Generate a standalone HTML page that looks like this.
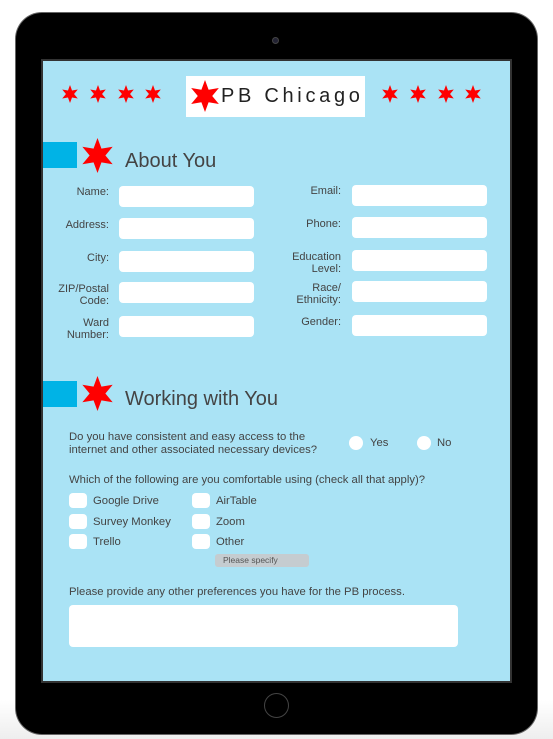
<!DOCTYPE html>
<html><head><meta charset="utf-8"><style>
*{margin:0;padding:0;box-sizing:border-box}
body{width:553px;height:739px;background:linear-gradient(#fff 0,#fff 700px,#eee 739px);position:relative;overflow:hidden;font-family:"Liberation Sans",Arial,sans-serif;color:#444}
.a{position:absolute}
#body{left:16px;top:13px;width:521px;height:721px;background:#000;border-radius:26px;box-shadow:0 0 0 1px #666}
#scr{left:41px;top:59px;width:471px;height:624px;background:#aae3f5;border:2px solid #333}
.in{position:absolute;background:#fff;border-radius:4px;width:135px;height:21px}
.lb{position:absolute;font-size:11px;line-height:12px;text-align:right;color:#444}
.cb{position:absolute;background:#fff;border-radius:4px;width:18px;height:15px}
.ct{position:absolute;font-size:11.3px;color:#444}
.rd{position:absolute;width:14px;height:14px;border-radius:50%;background:#fff}
.h{position:absolute;font-size:20px;color:#444}
.blk{position:absolute;left:43px;width:34px;height:26px;background:#00b3e6}
</style></head><body>
<svg width="0" height="0" style="position:absolute"><defs><symbol id="s" viewBox="-10 -10 20 20"><polygon fill="#f00" points="0,-10 2.25,-3.9 8.66,-5 4.5,0 8.66,5 2.25,3.9 0,10 -2.25,3.9 -8.66,5 -4.5,0 -8.66,-5 -2.25,-3.9"/></symbol></defs></svg>
<div class="a" id="body"></div>
<div class="a" style="left:272px;top:37px;width:7px;height:7px;border-radius:50%;background:#223;border:1px solid #444"></div>
<div class="a" style="left:264px;top:693px;width:25px;height:25px;border-radius:50%;border:1px solid #444"></div>
<div class="a" id="scr"></div>
<svg class="a" style="left:61px;top:85px" width="18" height="18"><use href="#s"/></svg>
<svg class="a" style="left:89px;top:85px" width="18" height="18"><use href="#s"/></svg>
<svg class="a" style="left:117px;top:85px" width="18" height="18"><use href="#s"/></svg>
<svg class="a" style="left:144px;top:85px" width="18" height="18"><use href="#s"/></svg>
<svg class="a" style="left:381px;top:85px" width="18" height="18"><use href="#s"/></svg>
<svg class="a" style="left:409px;top:85px" width="18" height="18"><use href="#s"/></svg>
<svg class="a" style="left:437px;top:85px" width="18" height="18"><use href="#s"/></svg>
<svg class="a" style="left:464px;top:85px" width="18" height="18"><use href="#s"/></svg>
<div class="a" style="left:186px;top:76px;width:179px;height:41px;background:#fff"></div>
<svg class="a" style="left:189px;top:80px" width="32" height="32"><use href="#s"/></svg>
<div class="a" style="left:221px;top:85px;font-size:20px;letter-spacing:3.7px;color:#222">PB Chicago</div>

<div class="blk" style="top:142px"></div>
<svg class="a" style="left:80px;top:138px" width="35" height="35"><use href="#s"/></svg>
<div class="h" style="left:125px;top:150px">About You</div>

<div class="lb" style="right:444px;top:186px">Name:</div>
<div class="lb" style="right:444px;top:219px">Address:</div>
<div class="lb" style="right:444px;top:252px">City:</div>
<div class="lb" style="right:444px;top:283px">ZIP/Postal<br>Code:</div>
<div class="lb" style="right:444px;top:317px">Ward<br>Number:</div>
<div class="in" style="left:119px;top:186px"></div>
<div class="in" style="left:119px;top:218px"></div>
<div class="in" style="left:119px;top:251px"></div>
<div class="in" style="left:119px;top:282px"></div>
<div class="in" style="left:119px;top:316px"></div>
<div class="lb" style="right:212px;top:185px">Email:</div>
<div class="lb" style="right:212px;top:218px">Phone:</div>
<div class="lb" style="right:212px;top:251px">Education<br>Level:</div>
<div class="lb" style="right:212px;top:282px">Race/<br>Ethnicity:</div>
<div class="lb" style="right:212px;top:316px">Gender:</div>
<div class="in" style="left:352px;top:185px"></div>
<div class="in" style="left:352px;top:217px"></div>
<div class="in" style="left:352px;top:250px"></div>
<div class="in" style="left:352px;top:281px"></div>
<div class="in" style="left:352px;top:315px"></div>

<div class="blk" style="top:381px"></div>
<svg class="a" style="left:80px;top:376px" width="35" height="35"><use href="#s"/></svg>
<div class="h" style="left:125px;top:388px">Working with You</div>

<div class="ct" style="left:69px;top:431px;line-height:13px">Do you have consistent and easy access to the<br>internet and other associated necessary devices?</div>
<div class="rd" style="left:349px;top:436px"></div><div class="ct" style="left:370px;top:437px">Yes</div>
<div class="rd" style="left:417px;top:436px"></div><div class="ct" style="left:437px;top:437px">No</div>
<div class="ct" style="left:69px;top:474px">Which of the following are you comfortable using (check all that apply)?</div>
<div class="cb" style="left:69px;top:493px"></div><div class="ct" style="left:93px;top:495px">Google Drive</div>
<div class="cb" style="left:69px;top:514px"></div><div class="ct" style="left:93px;top:516px">Survey Monkey</div>
<div class="cb" style="left:69px;top:534px"></div><div class="ct" style="left:93px;top:536px">Trello</div>
<div class="cb" style="left:192px;top:493px"></div><div class="ct" style="left:216px;top:495px">AirTable</div>
<div class="cb" style="left:192px;top:514px"></div><div class="ct" style="left:216px;top:516px">Zoom</div>
<div class="cb" style="left:192px;top:534px"></div><div class="ct" style="left:216px;top:536px">Other</div>
<div class="a" style="left:215px;top:554px;width:94px;height:13px;background:#c5ccd0;border-radius:3px;font-size:8.5px;line-height:13px;padding-left:8px;color:#555">Please specify</div>
<div class="ct" style="left:69px;top:586px">Please provide any other preferences you have for the PB process.</div>
<div class="a" style="left:69px;top:605px;width:389px;height:42px;background:#fff;border-radius:4px"></div>
</body></html>
